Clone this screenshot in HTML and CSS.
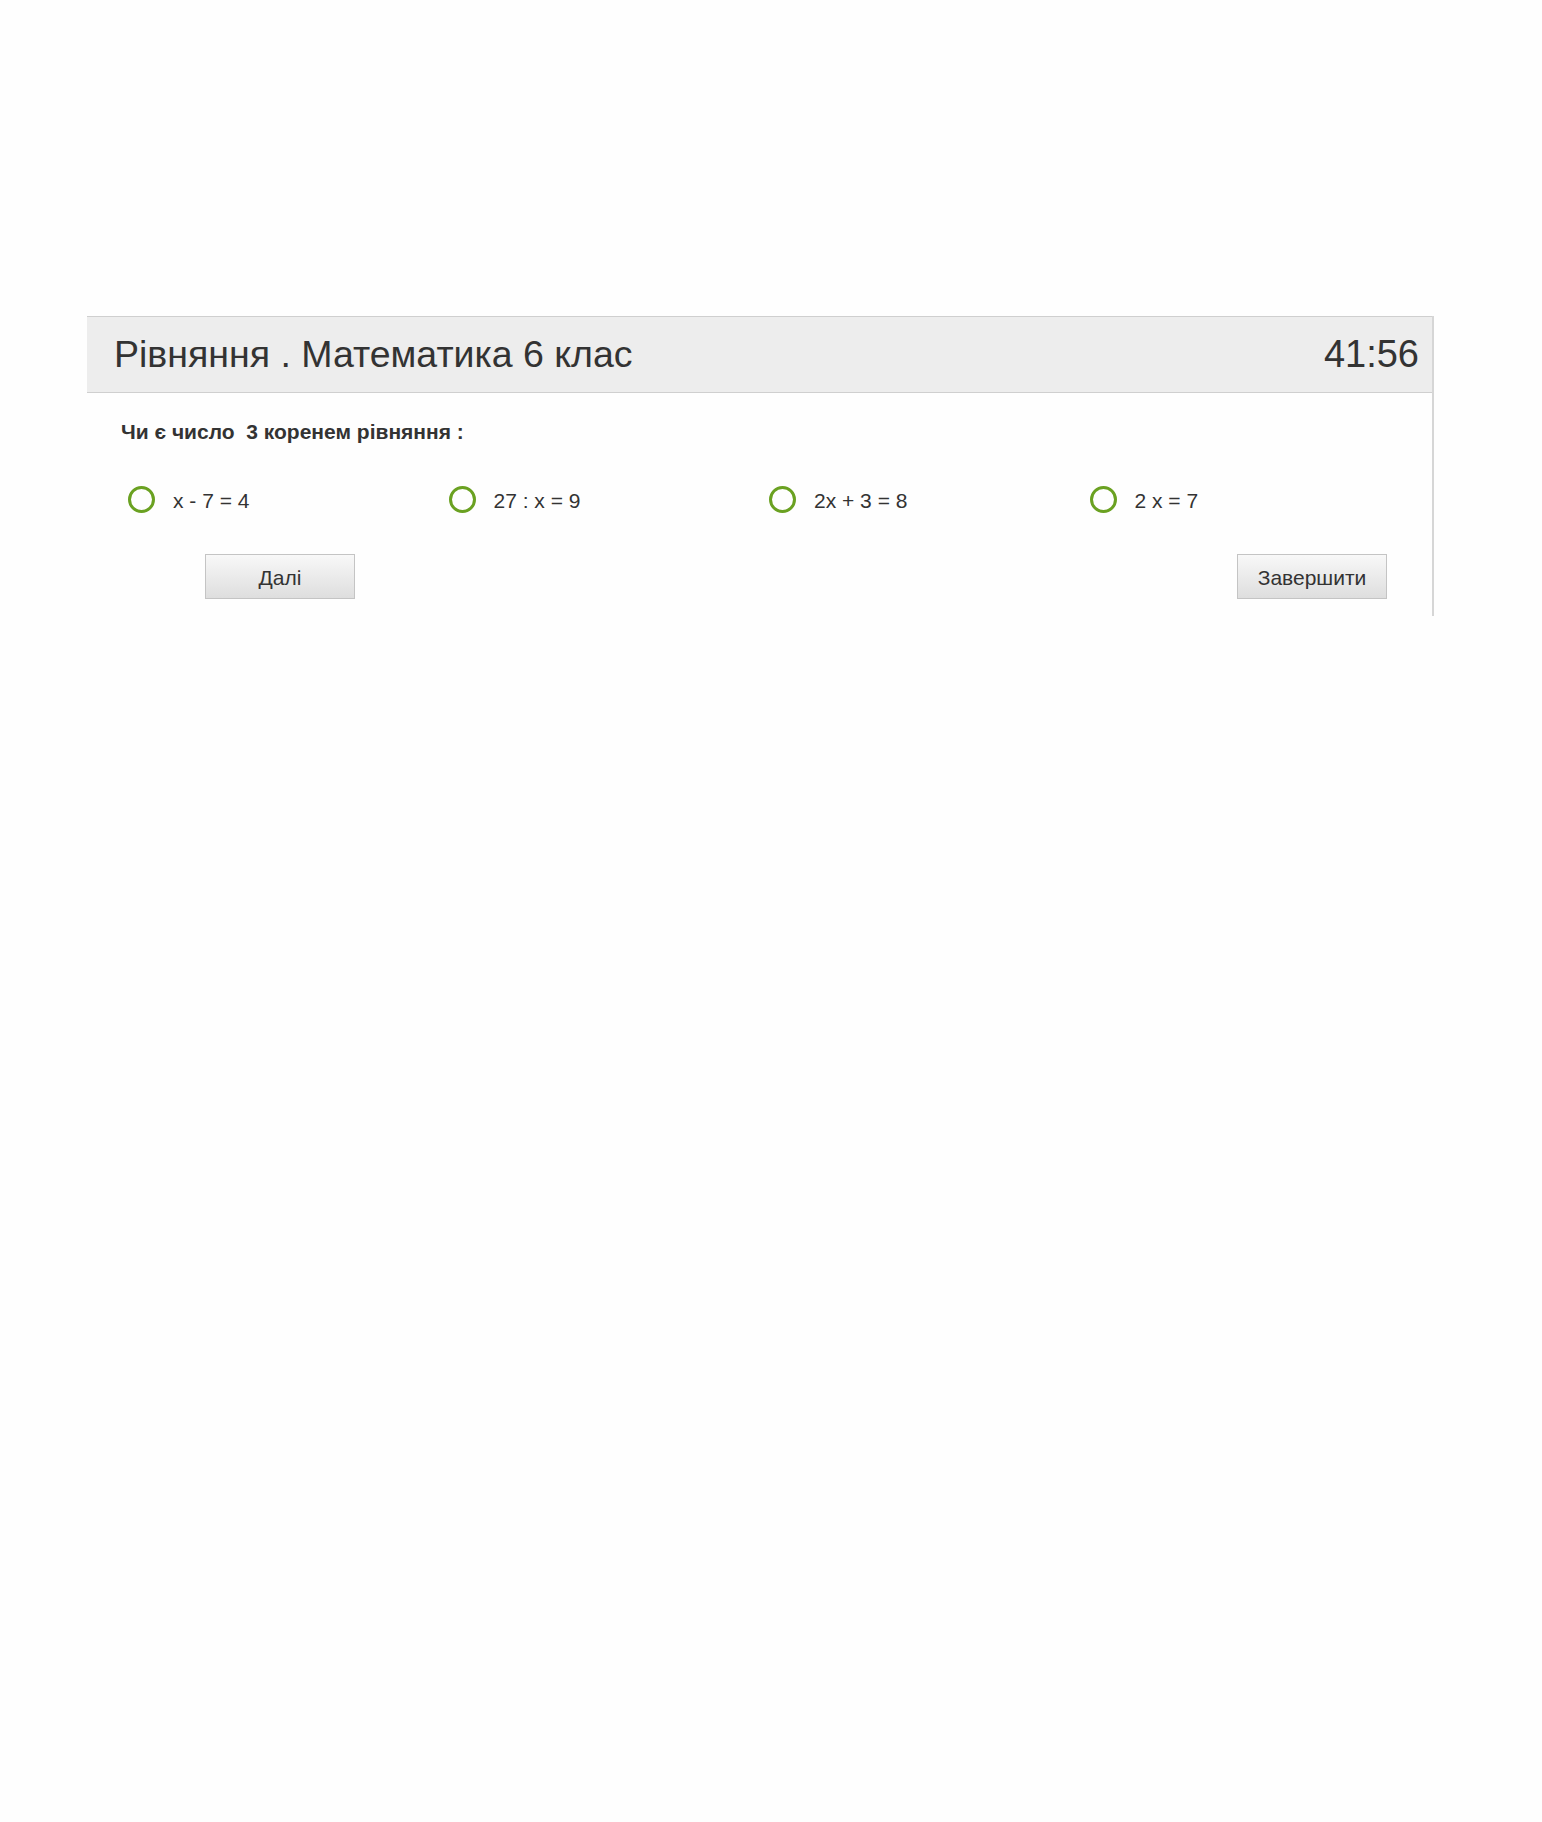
FILE: index.html
```html
<!DOCTYPE html>
<html lang="uk">
<head>
    <meta charset="UTF-8">
    <meta name="viewport" content="width=device-width, initial-scale=1.0">
    <title>Рівняння . Математика 6 клас</title>
    <link rel="stylesheet" href="styles.css">
</head>
<body>

    <div class="quiz">
        <div class="quiz-head">
            <h1 class="quiz-title">Рівняння . Математика 6 клас</h1>
            <div class="timer">41:56</div>
        </div>

        <p class="question">Чи є число&nbsp; 3 коренем рівняння :</p>

        <div class="answers">
            <label class="answer"><span class="radio"></span><span class="answer-text">x - 7 = 4</span></label>
            <label class="answer"><span class="radio"></span><span class="answer-text">27 : x = 9</span></label>
            <label class="answer"><span class="radio"></span><span class="answer-text">2x + 3 = 8</span></label>
            <label class="answer"><span class="radio"></span><span class="answer-text">2 x = 7</span></label>
        </div>

        <div class="actions">
            <button type="button" class="btn">Далі</button>
            <button type="button" class="btn">Завершити</button>
        </div>
    </div>

</body>
</html>
```

FILE: styles.css
```css
body {
    margin: 0;
    background-color: #fefefe;
    color: #333333;
    font-family: "Liberation Sans", Arial, sans-serif;
}

.quiz {
    width: 1345px;
    margin: 316px 0 0 87px;
    border-right: 2px solid #d6d6d6;
    padding-bottom: 17px;
}

.quiz-head {
    display: flex;
    justify-content: space-between;
    align-items: center;
    height: 75px;
    padding: 0 13px 0 27px;
    background-color: #ededed;
    border-top: 1px solid #cfcfcf;
    border-bottom: 1px solid #cfcfcf;
}

.quiz-title {
    margin: 0;
    font-size: 37.5px;
    font-weight: normal;
}

.timer {
    font-size: 38px;
}

.question {
    margin: 27px 0 0 34px;
    font-size: 21px;
    line-height: 24px;
    font-weight: bold;
}

.answers {
    display: grid;
    grid-template-columns: repeat(4, 1fr);
    margin-top: 42px;
    padding: 0 22px 0 41px;
}

.answer {
    display: flex;
    align-items: center;
    font-size: 21px;
    height: 26px;
}

.answer-text {
    padding-top: 4px;
}

.radio {
    width: 21px;
    height: 21px;
    border: 3px solid #6aa121;
    border-radius: 50%;
    margin-right: 18px;
}

.actions {
    display: flex;
    justify-content: space-between;
    margin-top: 42px;
    padding: 0 45px 0 118px;
}

.btn {
    width: 150px;
    height: 45px;
    border: 1px solid #c4c4c4;
    background: linear-gradient(#f8f8f8, #dedede);
    color: #333333;
    font-family: "Liberation Sans", Arial, sans-serif;
    font-size: 21px;
    padding-top: 3px;
    cursor: pointer;
}
```
